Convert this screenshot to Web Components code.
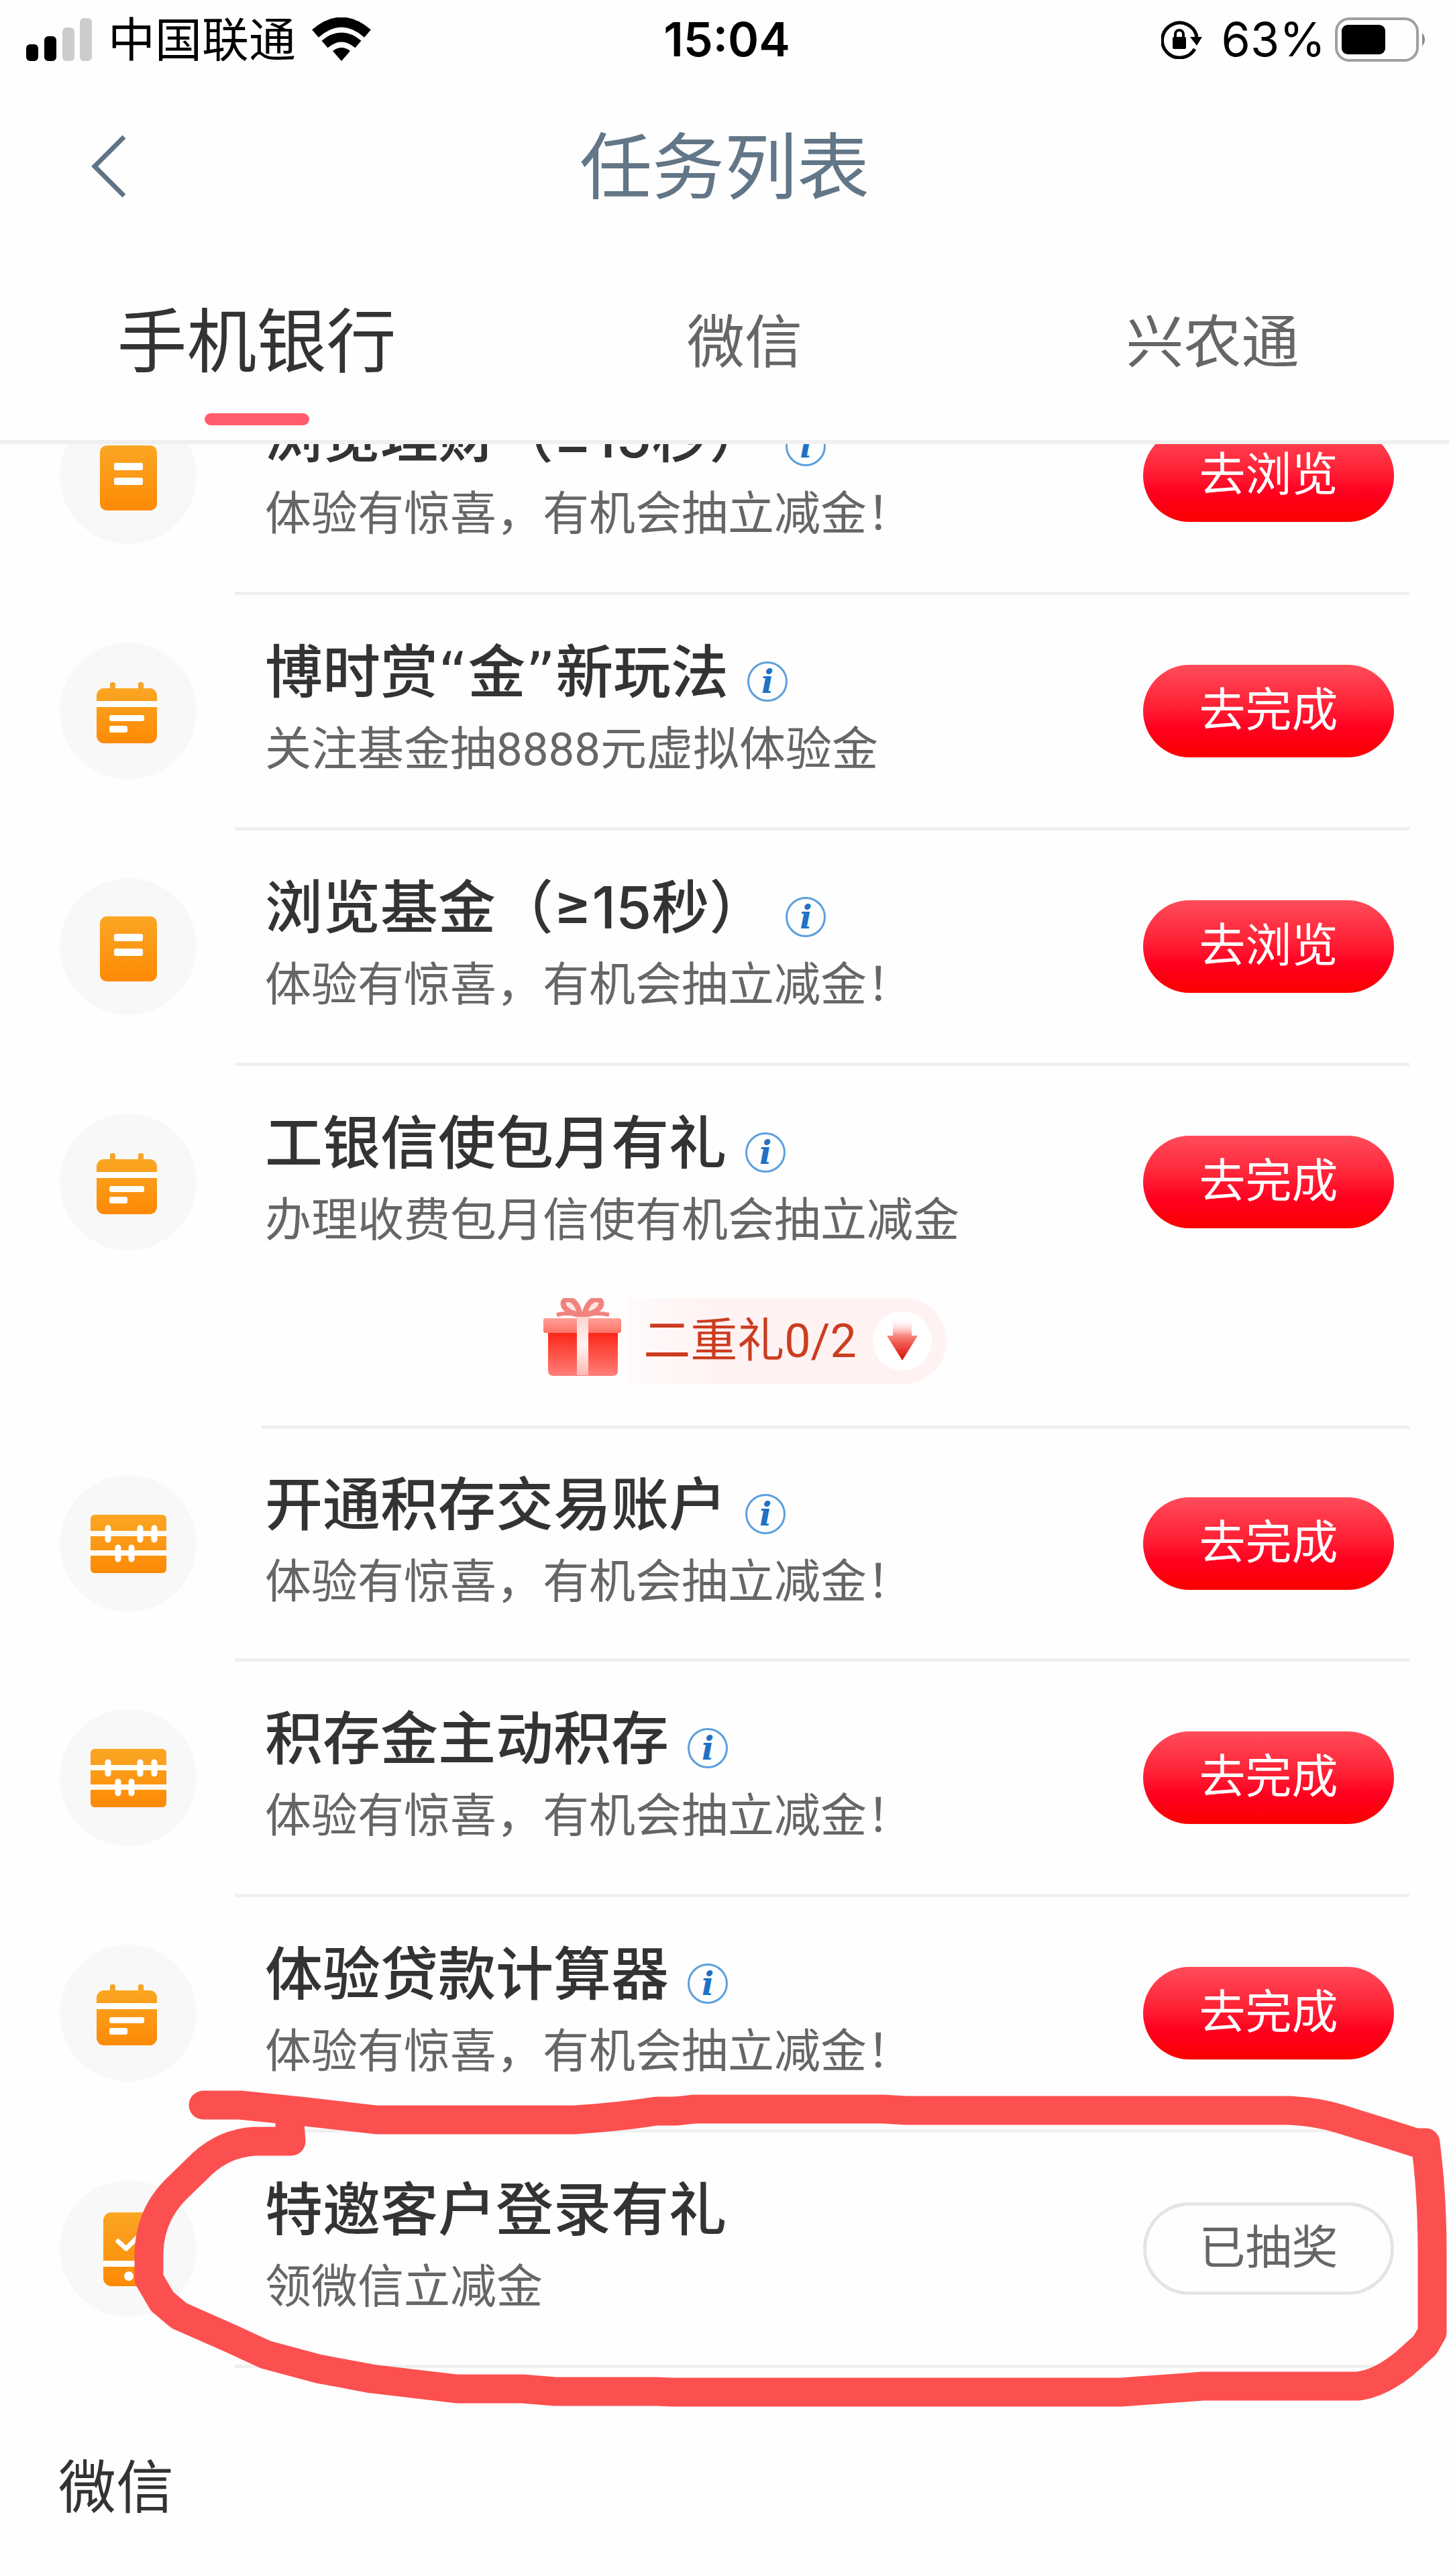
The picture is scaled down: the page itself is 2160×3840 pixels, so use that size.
<!DOCTYPE html>
<html lang="zh-CN">
<head>
<meta charset="utf-8">
<meta name="viewport" content="width=device-width, initial-scale=1">
<title>任务列表</title>
<style>
body{
  margin:0;
  background:#fefefe;
  color:#333;
  font-family: Roboto, "Noto Sans CJK SC", sans-serif;
}
</style>
</head>
<body>
<task-app>
  <status-bar slot="head" carrier="中国联通" time="15:04" battery="63%"></status-bar>
  <nav-bar slot="head">任务列表</nav-bar>
  <tab-bar slot="head" tabs="手机银行,微信,兴农通"></tab-bar>

  <task-item class="first" icon="doc" name="浏览理财（≥15秒）" action="去浏览" info>体验有惊喜，有机会抽立减金！</task-item>
  <task-item icon="calendar" name="博时赏“金”新玩法" action="去完成" info>关注基金抽8888元虚拟体验金</task-item>
  <task-item icon="doc" name="浏览基金（≥15秒）" action="去浏览" info>体验有惊喜，有机会抽立减金！</task-item>
  <task-item class="gift" icon="calendar" name="工银信使包月有礼" action="去完成" info>办理收费包月信使有机会抽立减金
    <gift-strip slot="extra">二重礼0/2</gift-strip>
  </task-item>
  <task-item class="short" icon="abacus" name="开通积存交易账户" action="去完成" info>体验有惊喜，有机会抽立减金！</task-item>
  <task-item icon="abacus" name="积存金主动积存" action="去完成" info>体验有惊喜，有机会抽立减金！</task-item>
  <task-item icon="calendar" name="体验贷款计算器" action="去完成" info>体验有惊喜，有机会抽立减金！</task-item>
  <task-item icon="phone" name="特邀客户登录有礼" action="已抽奖" done>领微信立减金
    <hand-mark slot="extra"></hand-mark>
  </task-item>
  <section-title>微信</section-title>
</task-app>

<script>
const icons = {
  doc: `
    <rect x="60" y="57" width="85" height="97" rx="10" fill="url(#g)"/>
    <rect x="81" y="83" width="43" height="11" rx="3" fill="#fff"/>
    <rect x="81" y="105" width="43" height="11" rx="3" fill="#fff"/>`,
  calendar: `
    <rect x="75" y="59" width="8" height="14" rx="3" fill="#f5a52c"/>
    <rect x="117" y="59" width="8" height="14" rx="3" fill="#f5a52c"/>
    <rect x="55" y="68" width="90" height="82" rx="11" fill="url(#g)"/>
    <rect x="55" y="87" width="90" height="9" fill="#fff"/>
    <rect x="74" y="108" width="52" height="9" rx="3" fill="#fff"/>
    <rect x="74" y="124" width="27" height="10" rx="3" fill="#fff"/>`,
  abacus: `
    <rect x="46" y="59" width="113" height="87" rx="6" fill="url(#g)"/>
    <path d="M46 87H159M46 116H159" stroke="#fffaf0" stroke-width="8"/>
    <path d="M72 79V96M120 79V96M141 79V96M87 108V125M107 108V125" stroke="#fff" stroke-width="9" stroke-linecap="round"/>`,
  phone: `
    <rect x="65" y="48" width="76" height="110" rx="12" fill="url(#g)"/>
    <path d="M87 91L99 102L119 82" fill="none" stroke="#fff" stroke-width="7" stroke-linecap="round" stroke-linejoin="round"/>
    <rect x="65" y="120" width="76" height="9" fill="#fff"/>
    <circle cx="103" cy="143" r="7" fill="#fff"/>`
};

customElements.define('task-app', class extends HTMLElement {
  constructor(){
    super();
    this.attachShadow({mode:'open'}).innerHTML = `
<style>
:host{ display:flex; flex-direction:column; min-height:100vh; }
header{ border-bottom:6px solid #f0f0f0; }
main{ flex:1; overflow:hidden; }
/* the list is scrolled a little way under the header */
::slotted(.first){ margin-top:-126px; }
</style>
<header><slot name="head"></slot></header>
<main><slot></slot></main>`;
  }
});

customElements.define('status-bar', class extends HTMLElement {
  connectedCallback(){
    this.attachShadow({mode:'open'}).innerHTML = `
<style>
:host{
  display:grid;
  grid-template-columns:1fr auto 1fr;
  align-items:center;
  height:118px;
  padding:0 32px 0 39px;
  color:#000;
  font-size:70px;
  line-height:80px;
}
div{ display:flex; align-items:center; }
svg{ display:block; flex:none; }
.left{ gap:24px; }
.right{ justify-content:flex-end; gap:14px; }
.right .lock{ margin-right:14px; }
b, .battery{ font-family:Inter, sans-serif; }
b{ font-weight:600; }
.carrier{ padding-top:4px; }
</style>
<div class="left">
  <svg width="98" height="64" viewBox="0 0 98 64">
    <rect y="39" width="18" height="25" rx="6"/>
    <rect x="27" y="27" width="18" height="37" rx="6"/>
    <rect x="54" y="14" width="18" height="50" rx="6" fill="#ccc"/>
    <rect x="80" width="18" height="64" rx="6" fill="#ccc"/>
  </svg>
  <span class="carrier">${this.getAttribute('carrier')}</span>
  <svg width="88" height="66" viewBox="0 0 88 66">
    <path d="M5 24Q44 -10 83 24" fill="none" stroke="#000" stroke-width="15"/>
    <path d="M19 40Q44 19 69 40" fill="none" stroke="#000" stroke-width="14"/>
    <path d="M31 50Q44 40 57 50L44 65Z"/>
  </svg>
</div>
<b>${this.getAttribute('time')}</b>
<div class="right">
  <svg class="lock" width="62" height="58" viewBox="0 0 62 58">
    <path d="M50 43A26 26 0 1 1 53 25" fill="none" stroke="#000" stroke-width="5"/>
    <path d="M43 25H61L53 38Z"/>
    <rect x="17" y="25" width="20" height="18" rx="2"/>
    <path d="M21 26V21a6 6 0 0 1 12 0V26" fill="none" stroke="#000" stroke-width="4"/>
  </svg>
  <span class="battery">${this.getAttribute('battery')}</span>
  <svg width="138" height="66" viewBox="0 0 138 66">
    <rect x="2" y="2" width="121" height="62" rx="19" fill="none" stroke="#a0a0a0" stroke-width="4"/>
    <rect x="10" y="11" width="65" height="44" rx="9"/>
    <path d="M130 23Q138 33 130 43Z" fill="#8a8a8a"/>
  </svg>
</div>`;
  }
});

customElements.define('nav-bar', class extends HTMLElement {
  constructor(){
    super();
    this.attachShadow({mode:'open'}).innerHTML = `
<style>
:host{
  display:grid;
  grid-template-columns:1fr auto 1fr;
  align-items:center;
  height:260px;
  padding:0 128px;
  color:#627687;
}
button{ justify-self:start; padding:8px; border:0; background:none; }
svg{ display:block; }
h1{ margin:0; padding-top:6px; font-size:108px; line-height:120px; font-weight:400; }
</style>
<button aria-label="返回">
  <svg width="54" height="94" viewBox="0 0 54 94"><path d="M49 3L5 47L49 91" fill="none" stroke="#5f7486" stroke-width="7"/></svg>
</button>
<h1><slot></slot></h1>`;
  }
});

customElements.define('tab-bar', class extends HTMLElement {
  connectedCallback(){
    const tabs = this.getAttribute('tabs').split(',');
    this.attachShadow({mode:'open'}).innerHTML = `
<style>
:host{
  display:grid;
  grid-template-columns:765fr 690fr 705fr;
  height:278px;
}
button{
  display:flex;
  flex-direction:column;
  align-items:center;
  padding:70px 0 0;
  border:0;
  background:none;
  color:#666;
  font:400 86px/128px Roboto, "Noto Sans CJK SC", sans-serif;
}
button[aria-selected=true]{ color:#333; font-size:104px; }
button[aria-selected=true]::after{
  content:"";
  width:156px;
  height:18px;
  margin-top:40px;
  border-radius:9px;
  background:#ff5d6c;
}
</style>
${tabs.map((t,i) => `<button role="tab" aria-selected="${i == 0}">${t}</button>`).join('')}`;
  }
});

customElements.define('task-item', class extends HTMLElement {
  connectedCallback(){
    const info = this.hasAttribute('info') ? '<button class="info" aria-label="说明">i</button>' : '';
    // curly quotes are set in a wider face than the rest of the title
    const name = this.getAttribute('name').replace(/[“”]/g, '<span class="q">$&</span>');
    this.attachShadow({mode:'open'}).innerHTML = `
<style>
:host{ display:block; position:relative; }
.row{
  display:flex;
  align-items:center;
  height:346px;
  padding:0 82px 0 89px;
}
:host(.short) .row{ height:342px; }
.icon{ flex:none; width:204px; height:204px; margin-right:102px; border-radius:50%; background:#f8f8f8; }
.text{ flex:1; }
.title{ display:flex; align-items:flex-end; gap:28px; }
h2{
  margin:0;
  font:500 86px/116px Inter, "Noto Sans CJK SC", sans-serif;
}
.q{ font-family:"DejaVu Sans", sans-serif; line-height:1; }
p{ margin:0; color:#666; font-size:69px; line-height:116px; }
.info{
  box-sizing:border-box;
  width:60px;
  height:60px;
  margin-bottom:14px;
  padding:0;
  border:3px solid #5c9fdd;
  border-radius:50%;
  background:none;
  color:#1f72c4;
  font:italic 700 48px/52px "DejaVu Serif", serif;
}
.go{
  flex:none;
  box-sizing:border-box;
  width:374px;
  height:138px;
  padding:0;
  border:0;
  border-radius:69px;
  background:linear-gradient(#ff4c5a, #ff2438 42%, #ff0020 68%, #fb0000);
  color:#fff;
  font:400 69px/100px Roboto, "Noto Sans CJK SC", sans-serif;
}
:host([done]) .go{ border:5px solid #e4e4e4; background:none; color:#666; }
.line{ height:5px; margin:0 59px 0 350px; background:#f0f0f0; }
:host(.gift) .line{ margin-left:390px; }
</style>
<div class="row">
  <svg class="icon" viewBox="0 0 204 204">
    <defs><linearGradient id="g" x2="0" y2="1"><stop stop-color="#fba624"/><stop offset="1" stop-color="#fd8a05"/></linearGradient></defs>
    ${icons[this.getAttribute('icon')]}
  </svg>
  <div class="text">
    <div class="title"><h2>${name}</h2>${info}</div>
    <p><slot></slot></p>
  </div>
  <button class="go">${this.getAttribute('action')}</button>
</div>
<slot name="extra"></slot>
<div class="line"></div>`;
  }
});

customElements.define('gift-strip', class extends HTMLElement {
  constructor(){
    super();
    this.attachShadow({mode:'open'}).innerHTML = `
<style>
:host{
  display:flex;
  justify-content:center;
  gap:8px;
  padding:0 0 62px 60px;
}
svg{ display:block; }
.pill{
  display:flex;
  align-items:center;
  gap:24px;
  height:128px;
  padding:0 22px 0 24px;
  border-radius:0 64px 64px 0;
  background:linear-gradient(90deg, #fffafa, #fff2f2 30%);
  color:#cc3d20;
  font-size:70px;
  line-height:90px;
}
</style>
<svg width="118" height="128" viewBox="0 0 118 128">
  <defs>
    <linearGradient id="lid" x2="0" y2="1"><stop stop-color="#ffa096"/><stop offset="1" stop-color="#ff7468"/></linearGradient>
    <linearGradient id="box" x2="0" y2="1"><stop stop-color="#fb2416"/><stop offset="1" stop-color="#ff7f78"/></linearGradient>
    <linearGradient id="rib" x2="0" y2="1"><stop stop-color="#ffd3cf"/><stop offset=".5" stop-color="#fff4f3"/><stop offset="1" stop-color="#ffb9b4"/></linearGradient>
  </defs>
  <g fill="#ffe3e0" stroke="#f1837e" stroke-width="8">
    <path d="M56 25C52 6 42 -1 33 3C26 9 34 22 56 25Z"/>
    <path d="M62 25C66 6 76 -1 85 3C92 9 84 22 62 25Z"/>
    <path d="M21 25Q40 20 59 28Q78 20 99 25" fill="none" stroke-width="6"/>
  </g>
  <path d="M8 50H112V108Q112 116 104 116H16Q8 116 8 108Z" fill="url(#box)"/>
  <rect x="1" y="30" width="116" height="22" rx="3" fill="url(#lid)"/>
  <rect x="51" y="28" width="17" height="87" fill="url(#rib)"/>
</svg>
<div class="pill">
  <span><slot></slot></span>
  <svg width="88" height="88" viewBox="0 0 88 88">
    <defs><linearGradient id="arr" x2="0" y2="1"><stop stop-color="#fff" stop-opacity="0"/><stop offset=".4" stop-color="#f88a84"/><stop offset=".6" stop-color="#f0574e"/><stop offset="1" stop-color="#d80f08"/></linearGradient></defs>
    <circle cx="44" cy="44" r="44" fill="#fff"/>
    <path d="M30 10H58V36H67L44 73L21 36H30Z" fill="url(#arr)"/>
  </svg>
</div>`;
  }
});

// red pen loop drawn round its row
customElements.define('hand-mark', class extends HTMLElement {
  constructor(){
    super();
    this.attachShadow({mode:'open'}).innerHTML = `
<style>
:host{ position:absolute; z-index:1; top:-69px; left:0; right:0; height:490px; pointer-events:none; }
svg{ display:block; width:100%; height:100%; }
</style>
<svg viewBox="0 3110 2160 490" preserveAspectRatio="none">
  <path fill="none" stroke="#fc5050" stroke-width="43" stroke-linecap="round" stroke-linejoin="round"
    d="M303 3138H358L456 3148L561 3160H856Q920 3156 979 3147H1007L1035 3144H1316L1350 3146H1922Q1965 3148 1999 3159L2060 3178L2110 3194H2125L2129 3230Q2135 3290 2135 3360V3477L2124 3496L2094 3523Q2056 3554 2023 3557H1793L1671 3566H1003L979 3565H828L779 3561H681L554 3546L474 3531L396 3510L344 3486L267 3452L242 3431L222 3397V3359Q223 3300 267 3259L302 3225Q335 3195 379 3192H434L431 3155"/>
</svg>`;
  }
});

customElements.define('section-title', class extends HTMLElement {
  constructor(){
    super();
    this.attachShadow({mode:'open'}).innerHTML = `
<style>
:host{ display:block; padding:122px 87px 70px; }
h2{ margin:0; font-size:86px; line-height:116px; font-weight:400; }
</style>
<h2><slot></slot></h2>`;
  }
});
</script>
</body>
</html>
